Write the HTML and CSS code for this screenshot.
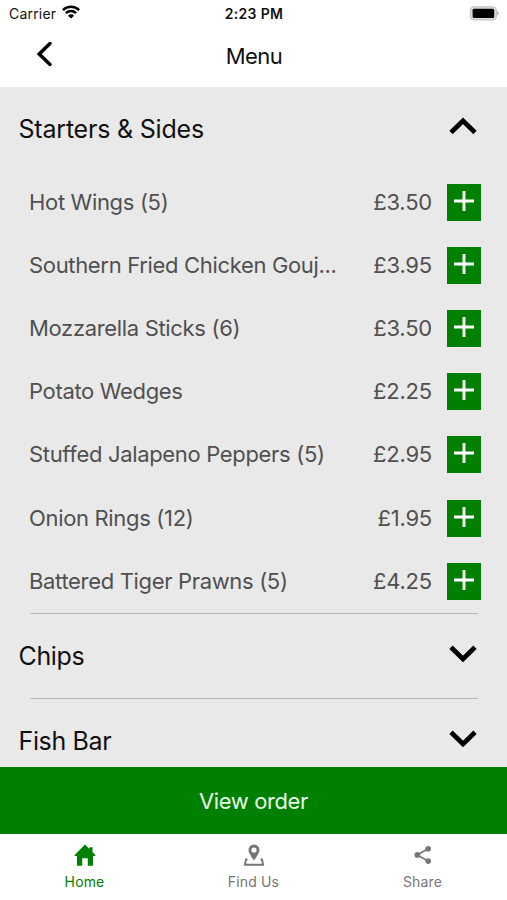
FILE: index.html
```html
<!DOCTYPE html>
<html lang="en">
<head>
<meta charset="utf-8">
<title>Menu</title>
<link rel="stylesheet" href="styles.css">
</head>
<body>
<div class="app">
  <header class="top">
    <div class="status">
      <div class="carrier"><span>Carrier</span>
        <svg width="18" height="14" viewBox="0 0 18 14"><g fill="none" stroke="#000" stroke-width="2.5"><path d="M.9 5.1a11.6 11.6 0 0 1 16.2 0"/><path d="M3.9 8.2a7.3 7.3 0 0 1 10.2 0"/></g><path d="M9 13.6 6 10.7a4.3 4.3 0 0 1 6 0z"/></svg>
      </div>
      <span class="clock">2:23 PM</span>
      <svg class="battery" width="31" height="15" viewBox="0 0 31 15"><rect x="1.3" y=".8" width="26" height="13" rx="3.6" fill="#ddd" stroke="#c4c4c4" stroke-width="1.2"/><rect x="3.6" y="2.800" width="21.600" height="9.200" rx="1.500"/><path d="M28.300 4.800q2.600 2.500 0 5z" fill="#999"/></svg>
    </div>
    <div class="nav">
      <svg class="back" width="18" height="28" viewBox="0 0 18 28"><path d="M14 3.500 3.200 14 14 24.400" fill="none" stroke="#000" stroke-width="3.500" stroke-linecap="round"/></svg>
      <h1>Menu</h1>
      <span></span>
    </div>
  </header>
  <main class="menu">
    <section>
      <div class="heading"><h2 class="expanded">Starters &amp; Sides</h2><svg class="chevron up" width="28" height="18" viewBox="0 0 28 18"><path d="M2 15.500 14 3.700l12 11.800"/></svg></div>
      <ul>
        <li><span class="name">Hot Wings (5)</span><span class="price">£3.50</span><button><svg width="20" height="20" viewBox="0 0 20 20"><path d="M10 0v20M0 10h20"/></svg></button></li>
        <li><span class="name">Southern Fried Chicken Gouj...</span><span class="price">£3.95</span><button><svg width="20" height="20" viewBox="0 0 20 20"><path d="M10 0v20M0 10h20"/></svg></button></li>
        <li><span class="name">Mozzarella Sticks (6)</span><span class="price">£3.50</span><button><svg width="20" height="20" viewBox="0 0 20 20"><path d="M10 0v20M0 10h20"/></svg></button></li>
        <li><span class="name">Potato Wedges</span><span class="price">£2.25</span><button><svg width="20" height="20" viewBox="0 0 20 20"><path d="M10 0v20M0 10h20"/></svg></button></li>
        <li><span class="name">Stuffed Jalapeno Peppers (5)</span><span class="price">£2.95</span><button><svg width="20" height="20" viewBox="0 0 20 20"><path d="M10 0v20M0 10h20"/></svg></button></li>
        <li><span class="name">Onion Rings (12)</span><span class="price">£1.95</span><button><svg width="20" height="20" viewBox="0 0 20 20"><path d="M10 0v20M0 10h20"/></svg></button></li>
        <li><span class="name">Battered Tiger Prawns (5)</span><span class="price">£4.25</span><button><svg width="20" height="20" viewBox="0 0 20 20"><path d="M10 0v20M0 10h20"/></svg></button></li>
      </ul>
    </section>
    <hr>
    <section>
      <div class="heading"><h2>Chips</h2><svg class="chevron" width="28" height="18" viewBox="0 0 28 18"><path d="M2 3.200 14 15 26 3.200"/></svg></div>
    </section>
    <hr>
    <section>
      <div class="heading"><h2>Fish Bar</h2><svg class="chevron" width="28" height="18" viewBox="0 0 28 18"><path d="M2 3.200 14 15 26 3.200"/></svg></div>
    </section>
  </main>
  <button class="order">View order</button>
  <nav class="tabs">
    <a class="active"><svg width="22" height="22" viewBox="0 0 22 22"><path d="M11 .600 15.500 5V3.200h3v4.700L21.300 11v1h-2.300v9.700h-5.200v-7.500H8.200v7.500H3V12H.700v-1z" fill="currentColor"/></svg><span>Home</span></a>
    <a><svg width="22" height="22" viewBox="0 0 22 22"><path fill="currentColor" fill-rule="evenodd" d="M11 .500a5.500 5.500 0 0 0-5.500 5.500C5.500 9.500 11 16.500 11 16.500s5.500-7 5.500-10.500A5.500 5.500 0 0 0 11 .500zM11 3.400a2.600 2.600 0 1 1 0 5.200A2.600 2.600 0 0 1 11 3.400z"/><path d="M4.500 15.500H3L1.900 20.700h18.200L19 15.500h-1.500" fill="none" stroke="currentColor" stroke-width="1.900"/></svg><span>Find Us</span></a>
    <a><svg width="22" height="22" viewBox="0 0 22 22"><path d="M16.100 4.800 5.100 10.900l11 6.200" fill="none" stroke="currentColor" stroke-width="1.700"/><g fill="currentColor"><circle cx="16.200" cy="4.800" r="2.800"/><circle cx="5.300" cy="10.900" r="2.800"/><circle cx="16.200" cy="17.100" r="2.800"/></g></svg><span>Share</span></a>
  </nav>
</div>
</body>
</html>
```
FILE: styles.css
```css
* { box-sizing: border-box; }
body { margin: 0; font-family: Inter, "Liberation Sans", sans-serif; color: #111; background: #fff; }
h1, h2, ul { margin: 0; padding: 0; font-weight: 400; }
button { border: 0; padding: 0; font: inherit; border-radius: 0; }
svg { display: block; flex: none; }
.app { width: 507px; height: 900px; display: flex; flex-direction: column; overflow: hidden; }
.top { height: 87px; flex: none; }
.status { height: 27px; display: grid; grid-template-columns: 1fr auto 1fr; align-items: center; padding: 0 7px 0 9px; font-size: 14px; }
.carrier { display: flex; gap: 6px; align-items: center; letter-spacing: .2px; }
.carrier svg { margin-top: -3px; }
.clock { font-weight: 600; letter-spacing: .35px; margin-right: 1px; }
.battery { justify-self: end; }
.nav { height: 58px; display: grid; grid-template-columns: 1fr auto 1fr; align-items: center; }
.back { margin-left: 36px; margin-top: -4px; }
h1 { font-size: 22px; line-height: 28px; letter-spacing: -.5px; padding-left: 1px; }
.menu { flex: 1; min-height: 0; overflow: hidden; background: #e9e9e9; }
.heading { height: 84px; display: flex; justify-content: space-between; align-items: center; padding: 0 30px 0 18.5px; }
h2 { font-size: 25px; line-height: 32px; letter-spacing: -.35px; }
h2.expanded { letter-spacing: -.2px; }
.chevron { fill: none; stroke: #000; stroke-width: 4.7; margin-top: -5px; }
.chevron.up { margin-top: -7px; }
ul { list-style: none; }
li { height: 63.1px; display: flex; align-items: center; padding: 0 26px 0 29px; font-size: 22px; color: #505050; }
.name { flex: 1; white-space: nowrap; letter-spacing: -.33px; margin-top: -1px; }
.price { margin: -1px 15px 0 0; letter-spacing: -.2px; }
li button { width: 34px; height: 37px; background: #008000; display: flex; align-items: center; justify-content: center; padding-bottom: 3px; }
li button path { stroke: #fff; stroke-width: 2.9; }
hr { height: 1px; margin: 0 29px 0 30px; border: 0; background: #b5b5b5; }
.order { height: 67px; flex: none; background: #008000; color: #e8ffe8; font-size: 22px; letter-spacing: -.4px; }
.tabs { height: 66px; flex: none; display: grid; grid-template-columns: repeat(3, 1fr); }
.tabs a { display: flex; flex-direction: column; align-items: center; padding-top: 10px; color: #777; font-size: 14px; line-height: 18px; gap: 7px; letter-spacing: .15px; }
.tabs .active { color: #008000; }
```
